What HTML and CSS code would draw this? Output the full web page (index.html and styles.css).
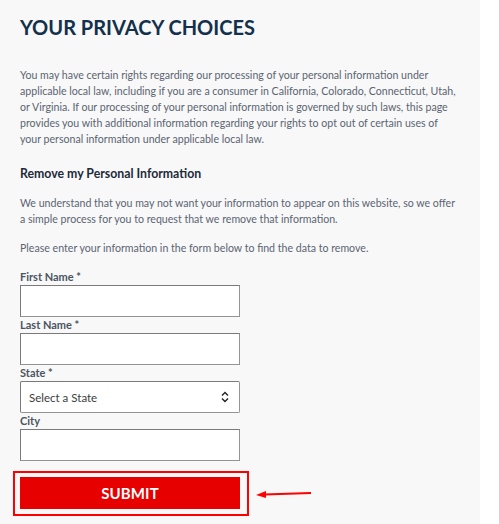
FILE: index.html
```html
<!DOCTYPE html>
<html lang="en">
<head>
<meta charset="utf-8">
<title>Your Privacy Choices</title>
<link rel="stylesheet" href="styles.css">
</head>
<body>
<main class="page">
  <h1 class="title">YOUR PRIVACY CHOICES</h1>
  <p class="text intro">You may have certain rights regarding our processing of your personal information under applicable local law, including if you are a consumer in California, Colorado, Connecticut, Utah, or Virginia. If our processing of your personal information is governed by such laws, this page provides you with additional information regarding your rights to opt out of certain uses of your personal information under applicable local law.</p>
  <h2 class="subtitle">Remove my Personal Information</h2>
  <p class="text">We understand that you may not want your information to appear on this website, so we offer a simple process for you to request that we remove that information.</p>
  <p class="text">Please enter your information in the form below to find the data to remove.</p>
  <form class="form">
    <label class="field"><span class="label">First Name *</span><input class="input" type="text"></label>
    <label class="field"><span class="label">Last Name *</span><input class="input" type="text"></label>
    <label class="field"><span class="label">State *</span>
      <span class="select-wrap">
        <select class="input select"><option>Select a State</option></select>
        <svg class="select-icon" width="8" height="12" viewBox="0 0 8 12"><path d="M1 4.5 L4 1.5 L7 4.5 M1 7.5 L4 10.5 L7 7.5" fill="none" stroke="#222" stroke-width="1.4"/></svg>
      </span>
    </label>
    <label class="field"><span class="label">City</span><input class="input" type="text"></label>
    <div class="submit-row">
      <div class="highlight"><button class="submit" type="button">SUBMIT</button></div>
      <svg class="arrow" width="64" height="12" viewBox="0 0 64 12"><path d="M57 5 L10 6.5" stroke="#f00" stroke-width="2" fill="none"/><path d="M2 7 L12 3 L12 10 Z" fill="#f00"/></svg>
    </div>
  </form>
</main>
</body>
</html>
```
FILE: styles.css
```css
html, body {
  margin: 0;
  padding: 0;
  background: #ffffff;
}
body {
  font-family: Lato, "Open Sans", "Liberation Sans", sans-serif;
}
.page {
  box-sizing: border-box;
  width: 480px;
  min-height: 524px;
  padding: 14px 20px 0 20px;
  background: #f8f8f8;
}
.title {
  margin: 0;
  font-size: 20px;
  line-height: 26px;
  font-weight: 700;
  color: #13304c;
}
.text {
  margin: 0 0 13px 0;
  font-size: 10.6px;
  line-height: 16px;
  color: #5a6472;
  width: 440px;
}
.intro {
  margin-top: 27px;
  margin-bottom: 18px;
}
.subtitle {
  margin: 0 0 12px 0;
  font-size: 12.3px;
  line-height: 18px;
  font-weight: 700;
  color: #1d2a38;
}
.form {
  display: flex;
  flex-direction: column;
  width: 220px;
}
.field {
  display: flex;
  flex-direction: column;
}
.label {
  font-size: 11px;
  line-height: 16px;
  font-weight: 700;
  color: #4a5561;
}
.input {
  box-sizing: border-box;
  width: 220px;
  height: 32px;
  margin: 0;
  border: 1px solid #949494;
  border-top-color: #7a7a7a;
  border-left-color: #7a7a7a;
  border-radius: 0;
  background: #ffffff;
  font-family: inherit;
  font-size: 11.5px;
  padding: 0 8px;
}
.select-wrap {
  position: relative;
  display: block;
}
.select {
  -webkit-appearance: none;
  appearance: none;
  color: #3d3d3d;
  padding-left: 8px;
  border-radius: 2px;
}
.select-icon {
  position: absolute;
  right: 11px;
  top: 10px;
  pointer-events: none;
}
.submit-row {
  display: flex;
  align-items: center;
  margin-top: 10px;
  margin-left: -7px;
}
.highlight {
  flex: none;
  border: 2px solid #ff0000;
  padding: 4px 7px 5px 5px;
}
.submit {
  display: block;
  width: 220px;
  height: 32px;
  border: none;
  border-radius: 0;
  margin: 0;
  background: #e60000;
  color: #ffffff;
  font-family: inherit;
  font-weight: 700;
  font-size: 15px;
  letter-spacing: 0.1px;
}
.arrow {
  flex: none;
  margin-left: 5px;
  margin-top: 1px;
}
```
